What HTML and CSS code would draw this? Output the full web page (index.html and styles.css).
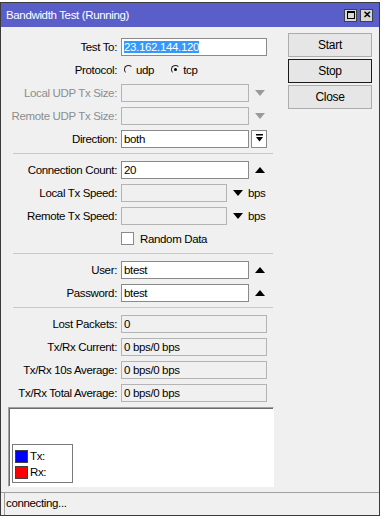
FILE: index.html
```html
<!DOCTYPE html>
<html lang="en">

<head>
  <meta charset="UTF-8" />
  <meta name="viewport" content="width=device-width, initial-scale=1.0" />
  <title>Bandwidth Test (Running)</title>
  <link rel="stylesheet" href="styles.css">
</head>

<body>
  <div class="window">
    <div class="titlebar">
      <span class="title">Bandwidth Test (Running)</span>
      <div class="title-btns">
        <span class="tbtn"><span class="max-icon"></span></span>
        <span class="tbtn close">&#x2715;</span>
      </div>
    </div>

    <div class="main">
      <div class="form">
        <div class="section">
          <div class="row">
            <label>Test To:</label>
            <div class="ctl"><div class="input wide"><span class="sel">23.162.144.120</span></div></div>
          </div>
          <div class="row">
            <label>Protocol:</label>
            <div class="ctl radios">
              <span class="radio"></span><span class="rlabel">udp</span>
              <span class="radio on"></span><span class="rlabel">tcp</span>
            </div>
          </div>
          <div class="row off">
            <label>Local UDP Tx Size:</label>
            <div class="ctl"><div class="input mid disabled"></div><span class="arrow down grey"></span></div>
          </div>
          <div class="row off">
            <label>Remote UDP Tx Size:</label>
            <div class="ctl"><div class="input mid disabled"></div><span class="arrow down grey"></span></div>
          </div>
          <div class="row">
            <label>Direction:</label>
            <div class="ctl">
              <div class="input mid">both</div>
              <span class="drop-btn">
                <svg width="9" height="9" viewBox="0 0 9 9"><rect x="1" y="0" width="7" height="1.5" fill="#000"/><path d="M1 3 H8 L4.5 7.5 Z" fill="#000"/></svg>
              </span>
            </div>
          </div>
        </div>

        <div class="sep"></div>

        <div class="section">
          <div class="row">
            <label>Connection Count:</label>
            <div class="ctl"><div class="input mid">20</div><span class="arrow up"></span></div>
          </div>
          <div class="row">
            <label>Local Tx Speed:</label>
            <div class="ctl"><div class="input short disabled"></div><span class="arrow down"></span><span class="unit">bps</span></div>
          </div>
          <div class="row">
            <label>Remote Tx Speed:</label>
            <div class="ctl"><div class="input short disabled"></div><span class="arrow down"></span><span class="unit">bps</span></div>
          </div>
          <div class="row">
            <label></label>
            <div class="ctl"><span class="check"></span><span class="clabel">Random Data</span></div>
          </div>
        </div>

        <div class="sep"></div>

        <div class="section">
          <div class="row">
            <label>User:</label>
            <div class="ctl"><div class="input mid">btest</div><span class="arrow up"></span></div>
          </div>
          <div class="row">
            <label>Password:</label>
            <div class="ctl"><div class="input mid">btest</div><span class="arrow up"></span></div>
          </div>
        </div>

        <div class="sep"></div>

        <div class="section">
          <div class="row">
            <label>Lost Packets:</label>
            <div class="ctl"><div class="input wide readonly">0</div></div>
          </div>
          <div class="row">
            <label>Tx/Rx Current:</label>
            <div class="ctl"><div class="input wide readonly">0 bps/0 bps</div></div>
          </div>
          <div class="row">
            <label>Tx/Rx 10s Average:</label>
            <div class="ctl"><div class="input wide readonly">0 bps/0 bps</div></div>
          </div>
          <div class="row">
            <label>Tx/Rx Total Average:</label>
            <div class="ctl"><div class="input wide readonly">0 bps/0 bps</div></div>
          </div>
        </div>

        <div class="graph">
          <div class="legend">
            <div class="legend-item"><span class="swatch tx"></span>Tx:</div>
            <div class="legend-item"><span class="swatch rx"></span>Rx:</div>
          </div>
        </div>
      </div>

      <div class="actions">
        <button>Start</button>
        <button class="focused">Stop</button>
        <button>Close</button>
      </div>
    </div>

    <div class="statusbar">
      <div class="status-cell">connecting...</div>
    </div>
  </div>
</body>

</html>
```

FILE: styles.css
```css
* {
  box-sizing: border-box;
}

body {
  margin: 0;
  padding-top: 2px;
  background: #fff;
  font-family: 'Liberation Sans', Arial, sans-serif;
  font-size: 11.5px;
  letter-spacing: -0.35px;
  color: #000;
}

.window {
  width: 380px;
  border: 1px solid #3a3a3a;
  background: #f0f0f0;
}

.titlebar {
  height: 24px;
  background: #5a5ec8;
  color: #fff;
  display: flex;
  align-items: center;
  justify-content: space-between;
  padding: 0 6px 0 5px;
}

.title {
  font-size: 11.5px;
}

.title-btns {
  display: flex;
  gap: 3px;
}

.tbtn {
  width: 13px;
  height: 13px;
  background: #d8d8d8;
  border: 1px solid #404040;
  display: flex;
  align-items: center;
  justify-content: center;
  color: #000;
  font-size: 10px;
  font-weight: bold;
  line-height: 1;
  letter-spacing: 0;
}

.max-icon {
  width: 8px;
  height: 8px;
  border: 1px solid #000;
  border-top-width: 2px;
}

.main {
  display: flex;
}

.form {
  width: 280px;
  padding: 8px 0 0 0;
}

.row {
  display: grid;
  grid-template-columns: 116px 1fr;
  column-gap: 4px;
  height: 23px;
  align-items: center;
}

.row label {
  text-align: right;
  white-space: nowrap;
}

.row.off label {
  color: #8d8d8d;
}

.ctl {
  display: flex;
  align-items: center;
}

.input {
  height: 18px;
  border: 1px solid #8a8a8a;
  background: #fff;
  padding: 0 2px;
  line-height: 16px;
  white-space: nowrap;
}

.input.wide {
  width: 146px;
}

.input.mid {
  width: 128px;
}

.input.short {
  width: 106px;
}

.input.disabled {
  background: #f0f0f0;
  border-color: #b4b4b4;
}

.input.readonly {
  background: #f0f0f0;
  border-color: #b4b4b4;
}

.sel {
  background: #3399ff;
  color: #fff;
}

.radio {
  width: 9px;
  height: 9px;
  border-radius: 50%;
  border: 1px solid transparent;
  border-top-color: #202020;
  border-left-color: #202020;
  margin: 0 3px 0 3px;
  position: relative;
}

.radio.on::after {
  content: "";
  position: absolute;
  left: 2px;
  top: 2px;
  width: 3px;
  height: 3px;
  border-radius: 50%;
  background: #000;
}

.rlabel {
  margin-right: 14px;
}

.arrow {
  width: 0;
  height: 0;
  border-left: 5px solid transparent;
  border-right: 5px solid transparent;
  margin-left: 6px;
}

.arrow.down {
  border-top: 6px solid #000;
}

.arrow.up {
  border-bottom: 6px solid #000;
}

.arrow.down.grey {
  border-top-color: #9a9a9a;
}

.unit {
  margin-left: 5px;
}

.drop-btn {
  width: 16px;
  height: 18px;
  margin-left: 2px;
  border: 1px solid #8a8a8a;
  background: #fff;
  display: flex;
  align-items: center;
  justify-content: center;
}

.check {
  width: 13px;
  height: 13px;
  border: 1px solid #8a8a8a;
  background: #fff;
  margin-right: 6px;
}

.sep {
  height: 1px;
  background: #c8c8c8;
  margin: 3px 8px 4px 12px;
}

.graph {
  margin: 3px 0 0 7px;
  width: 266px;
  height: 80px;
  background: #fff;
  border: 1px solid #a0a0a0;
  border-right-color: #fff;
  border-bottom-color: #fff;
  box-shadow: inset 1px 1px 0 #6a6a6a;
  display: flex;
  align-items: flex-end;
  padding: 0 0 3px 3px;
}

.legend {
  width: 61px;
  height: 39px;
  border: 1px solid #7a7a7a;
  padding: 3px 2px;
}

.legend-item {
  display: flex;
  align-items: center;
  height: 16px;
  gap: 2px;
}

.swatch {
  width: 13px;
  height: 13px;
  border: 1px solid #404040;
}

.swatch.tx {
  background: #0000ff;
}

.swatch.rx {
  background: #ff0000;
}

.actions {
  display: flex;
  flex-direction: column;
  gap: 2px;
  padding: 6px 0 0 7px;
}

button {
  width: 84px;
  height: 24px;
  font-family: inherit;
  font-size: 12px;
  letter-spacing: -0.3px;
  color: #000;
  background: #e6e6e6;
  border: 1px solid #adadad;
  padding: 0;
}

button.focused {
  border-color: #1a1a1a;
}

.statusbar {
  margin-top: 5px;
  border-top: 1px solid #a0a0a0;
  padding-right: 4px;
  height: 23px;
}

.status-cell {
  height: 100%;
  border-left: 1px solid #a0a0a0;
  margin-left: 3px;
  padding-left: 1px;
  line-height: 21px;
}
```
